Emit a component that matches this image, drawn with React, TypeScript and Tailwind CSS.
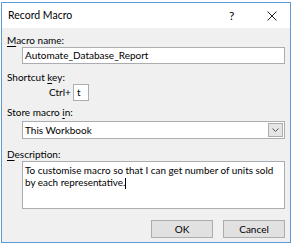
import React from 'react'

const font = { fontFamily: 'Lato, "Segoe UI", sans-serif' }

const Label: React.FC<{ pre?: string; u: string; post: string; className?: string }> = ({ pre = '', u, post, className = '' }) => (
  <div className={`h-[14px] leading-[14px] text-black ${className}`}>
    {pre}
    <span className="underline underline-offset-2">{u}</span>
    {post}
  </div>
)

export default function App() {
  return (
    <div className="w-[293px] h-[247px] bg-white pt-[2px] pl-[1px] overflow-hidden" style={font}>
      <div className="w-[290px] h-[241px] border border-[#5b9bd8] flex flex-col">
        {/* title bar */}
        <div className="h-[25px] bg-white flex items-center pl-[6px] text-[10.5px] text-black">
          <span className="flex-1">Record Macro</span>
          <span className="w-[10px] mr-[28px] text-[12px]">?</span>
          <svg width="10" height="10" viewBox="0 0 10 10" className="mr-[13px]">
            <path d="M0.5 0.5 L9.5 9.5 M9.5 0.5 L0.5 9.5" stroke="#222" strokeWidth="1" />
          </svg>
        </div>

        {/* body */}
        <div className="flex-1 bg-[#f0f0f0] pl-[5px] pt-[5px] flex flex-col text-[10px]">
          <Label u="M" post="acro name:" />
          <div className="ml-[15px] w-[263px] h-[17px] bg-white border border-[#abadb3] leading-[15px] pl-[2px]">
            Automate_Database_Report
          </div>

          <Label pre="Shortcut " u="k" post="ey:" className="mt-[6px]" />
          <div className="flex items-center ml-[42px] h-[17px]">
            <span className="w-[24px]">Ctrl+</span>
            <div className="w-[16px] h-[17px] bg-white border border-[#abadb3] leading-[15px] pl-[3px]">t</div>
          </div>

          <Label pre="Store macro " u="i" post="n:" className="mt-[4px]" />
          <div className="mt-[2px] ml-[15px] w-[263px] h-[18px] bg-white border border-[#abadb3] flex items-center">
            <span className="flex-1 pl-[2px]">This Workbook</span>
            <div className="w-[15px] h-[14px] mr-[1px] bg-[#e5e5e5] border border-[#adadad] flex items-center justify-center">
              <svg width="7" height="4" viewBox="0 0 7 4">
                <path d="M0.5 0.5 L3.5 3.5 L6.5 0.5" stroke="#555" strokeWidth="1" fill="none" />
              </svg>
            </div>
          </div>

          <Label u="D" post="escription:" className="mt-[8px]" />
          <div className="ml-[15px] w-[263px] h-[48px] bg-white border border-[#abadb3] text-[9.9px] leading-[12px] pl-[2px] pt-[2px]">
            To customise macro so that I can get number of units sold by each representative.
            <span className="inline-block w-px h-[11px] bg-black align-middle" />
          </div>

          <div className="mt-[11px] flex justify-end gap-[10px] pr-[5px]">
            <button className="w-[62px] h-[18px] bg-[#e1e1e1] border border-[#adadad] leading-[16px] text-black">OK</button>
            <button className="w-[62px] h-[18px] bg-[#e1e1e1] border border-[#adadad] leading-[16px] text-black">Cancel</button>
          </div>
        </div>
      </div>
    </div>
  )
}
